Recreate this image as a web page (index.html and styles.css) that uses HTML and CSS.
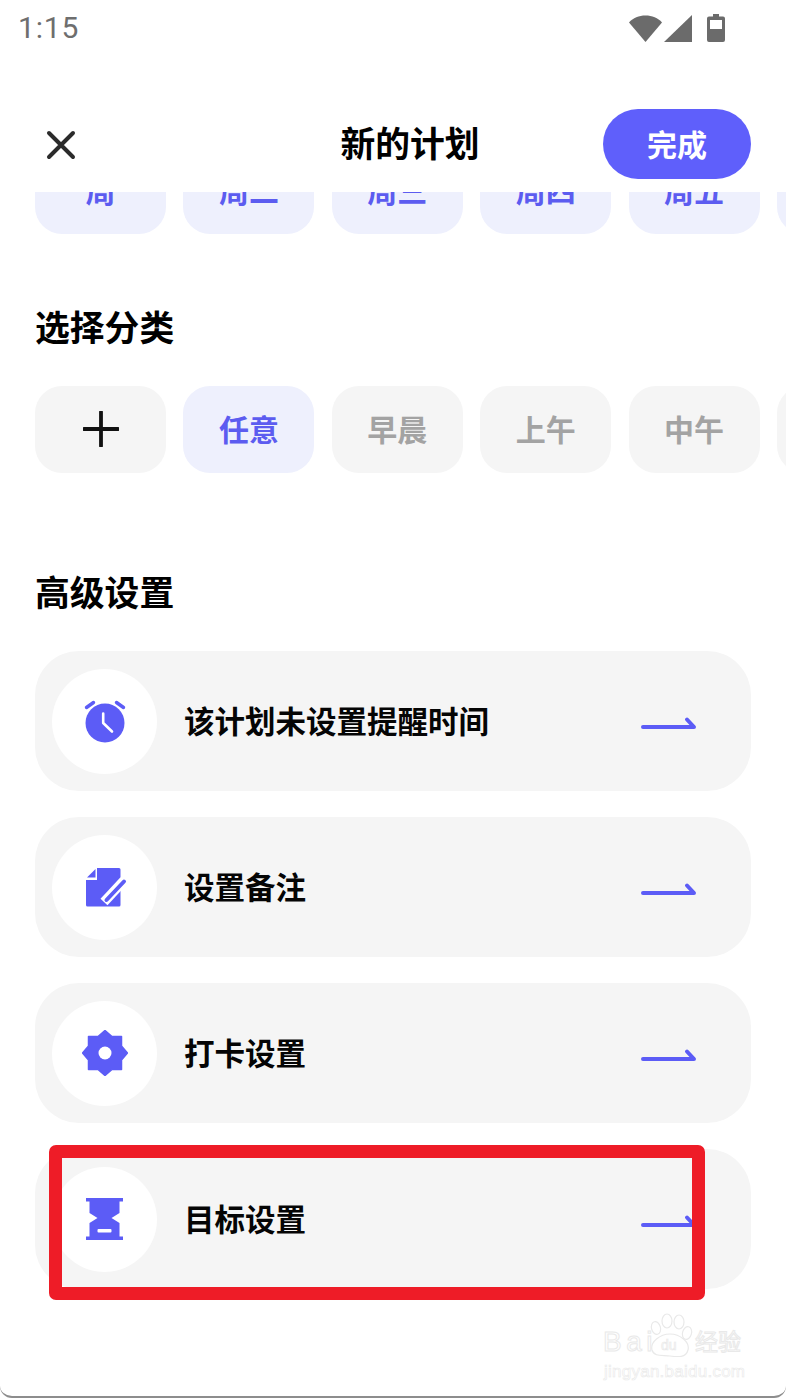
FILE: index.html
```html
<!DOCTYPE html>
<html lang="zh">
<head>
<meta charset="utf-8">
<title>新的计划</title>
<link rel="stylesheet" href="styles.css">
</head>
<body>
<div class="screen">
  <div class="status">
    <span class="time">1:15</span>
    <div class="status-icons">
      <svg class="ic-wifi" width="33" height="27" viewBox="0 0 33 27"><path d="M0 7.5C4 3 10 .6 16.500 .6S29 3 33 7.500L16.500 27Z" fill="#6b6b6b"/></svg>
      <svg class="ic-signal" width="28" height="27" viewBox="0 0 28 27"><path d="M0 27 28 0V27Z" fill="#6b6b6b"/></svg>
      <svg class="ic-batt" width="18" height="28" viewBox="0 0 18 28"><path d="M6 0h6v2.500h4a2 2 0 0 1 2 2V26a2 2 0 0 1-2 2H2a2 2 0 0 1-2-2V4.500a2 2 0 0 1 2-2h4Z" fill="#6b6b6b"/><rect x="3" y="6" width="12" height="9" fill="#fff"/></svg>
    </div>
  </div>

  <header class="topbar">
    <svg class="close" width="30" height="30" viewBox="0 0 30 30"><path d="M3 3 27 27M27 3 3 27" stroke="#2b2b2b" stroke-width="4" stroke-linecap="round"/></svg>
    <h1 class="title">新的计划</h1>
    <button class="done">完成</button>
  </header>

  <main class="content">
    <div class="clip">
      <div class="chips">
        <div class="chip on">周</div>
        <div class="chip on">周二</div>
        <div class="chip on">周三</div>
        <div class="chip on">周四</div>
        <div class="chip on">周五</div>
        <div class="chip on">周六</div>
      </div>
    </div>

    <h2 class="section sec-cat">选择分类</h2>
    <div class="chips">
      <div class="chip chip-add">
        <svg width="36" height="36" viewBox="0 0 36 36"><path d="M18 1V35M1 18H35" stroke="#111" stroke-width="3.800" stroke-linecap="round"/></svg>
      </div>
      <div class="chip on">任意</div>
      <div class="chip">早晨</div>
      <div class="chip">上午</div>
      <div class="chip">中午</div>
      <div class="chip">下午</div>
    </div>

    <h2 class="section sec-adv">高级设置</h2>
    <div class="rows">
      <div class="row">
        <div class="disc">
          <svg width="44" height="44" viewBox="0 0 44 44">
            <path d="M3.500 8.500 10.500 3.500M40.500 8.500 33.500 3.500" stroke="#5c5cf6" stroke-width="3.400" stroke-linecap="round"/>
            <circle cx="22" cy="24" r="19.500" fill="#5c5cf6"/>
            <path d="M20.200 14.500V24L29 32.500" stroke="#fff" stroke-width="2.600" fill="none" stroke-linecap="round" stroke-linejoin="round"/>
          </svg>
        </div>
        <span class="label">该计划未设置提醒时间</span>
        <svg class="arrow" width="56" height="16" viewBox="0 0 56 16"><path d="M3 13H54L47 5.500" stroke="#5c5cf6" stroke-width="4" fill="none" stroke-linecap="round" stroke-linejoin="round"/></svg>
      </div>
      <div class="row">
        <div class="disc">
          <svg class="ic-note" width="40" height="39" viewBox="0 0 40 39">
            <path d="M11 0H33a1.500 1.500 0 0 1 1.500 1.500V37a1.500 1.500 0 0 1-1.500 1.500H1.500A1.500 1.500 0 0 1 0 37V12H11Z" fill="#5c5cf6"/>
            <path d="M1 9.500 9.500 1V9.500Z" fill="#5c5cf6"/>
            <path d="M18 34 38 12.500" stroke="#fff" stroke-width="9.500"/>
            <path d="M20.500 32 38 13.500" stroke="#5c5cf6" stroke-width="4" stroke-linecap="round"/>
          </svg>
        </div>
        <span class="label">设置备注</span>
        <svg class="arrow" width="56" height="16" viewBox="0 0 56 16"><path d="M3 13H54L47 5.500" stroke="#5c5cf6" stroke-width="4" fill="none" stroke-linecap="round" stroke-linejoin="round"/></svg>
      </div>
      <div class="row">
        <div class="disc">
          <svg width="46" height="46" viewBox="0 0 46 46">
            <path d="M23 .5 30 6.500 39.500 6.500 39.500 16 45.500 23 39.500 30 39.500 39.500 30 39.500 23 45.500 16 39.500 6.500 39.500 6.500 30 .5 23 6.500 16 6.500 6.500 16 6.500Z" fill="#5c5cf6" stroke="#5c5cf6" stroke-width="1.500" stroke-linejoin="round"/>
            <circle cx="23" cy="23" r="6.500" fill="#fff"/>
          </svg>
        </div>
        <span class="label">打卡设置</span>
        <svg class="arrow" width="56" height="16" viewBox="0 0 56 16"><path d="M3 13H54L47 5.500" stroke="#5c5cf6" stroke-width="4" fill="none" stroke-linecap="round" stroke-linejoin="round"/></svg>
      </div>
      <div class="row">
        <div class="disc">
          <svg width="37" height="42" viewBox="0 0 37 42">
            <path d="M0 0H37V3.500H33.500V15L25.500 20 33.500 25V38.500H37V42H0V38.500H3.500V25L11.500 20 3.500 15V3.500H0Z" fill="#5c5cf6"/>
            <rect x="11.500" y="31" width="14" height="3.500" rx="1" fill="#fff"/>
          </svg>
        </div>
        <span class="label">目标设置</span>
        <svg class="arrow" width="56" height="16" viewBox="0 0 56 16"><path d="M3 13H54L47 5.500" stroke="#5c5cf6" stroke-width="4" fill="none" stroke-linecap="round" stroke-linejoin="round"/></svg>
      </div>
    </div>
  </main>

  <div class="mark"></div>

  <div class="baidu">
    <div class="b-top">
      <span class="b-bai">Bai</span>
      <svg class="b-paw" width="43" height="44" viewBox="0 0 43 44" fill="none" stroke="#e9e9e9" stroke-width="1.200">
        <ellipse cx="6" cy="15" rx="4.500" ry="6.500" transform="rotate(-15 6 15)"/>
        <ellipse cx="17" cy="8" rx="5" ry="7"/>
        <ellipse cx="29" cy="9" rx="5" ry="7"/>
        <ellipse cx="37" cy="20" rx="4.500" ry="6.500" transform="rotate(15 37 20)"/>
        <path d="M2 37C0 29 10 21 20 21S40 29 38 37 28 44 20 43 4 44 2 37Z"/>
        <text class="b-du" x="11" y="37">du</text>
      </svg>
      <span class="b-jy">经验</span>
    </div>
    <div class="b-url">jingyan.baidu.com</div>
  </div>

  <div class="bottom-edge"></div>
</div>
</body>
</html>
```
FILE: styles.css
```css
* { box-sizing: border-box; }
html, body { margin: 0; padding: 0; background: #fff; }
body { font-family: "Noto Sans CJK SC", "Noto Sans", sans-serif; }

.screen {
  position: relative;
  width: 786px;
  height: 1398px;
  overflow: hidden;
  background: #fff;
}

.status {
  height: 56px;
  padding: 0 61px 0 18px;
  display: flex;
  align-items: center;
  justify-content: space-between;
}
.time {
  font-family: Roboto, sans-serif;
  font-size: 30px;
  color: #6e6e6e;
  letter-spacing: 0.8px;
  line-height: 1;
}
.status-icons { display: flex; align-items: flex-end; gap: 2px; }
.ic-batt { margin-left: 13px; }

.topbar {
  position: relative;
  height: 136px;
  padding: 53px 35px 0 46px;
  display: flex;
  align-items: flex-start;
  justify-content: space-between;
}
.close { margin-top: 21px; }
.title {
  position: absolute;
  left: 0;
  top: 61px;
  width: 820px;
  margin: 0;
  text-align: center;
  font-size: 34.800px;
  font-weight: 700;
  line-height: 50px;
  color: #000;
}
.done {
  width: 148px;
  height: 70px;
  border: 0;
  border-radius: 35px;
  background: #5f5ffb;
  color: #fff;
  font-family: inherit;
  font-size: 30px;
  font-weight: 700;
  padding: 0 0 2px;
}

.content { padding-left: 35px; }
.clip {
  height: 42px;
  display: flex;
  align-items: flex-end;
  overflow: hidden;
}
.chips { display: flex; gap: 17.400px; flex: none; }
.chip {
  flex: none;
  width: 131px;
  height: 87px;
  padding-bottom: 3px;
  border-radius: 27px;
  background: #f5f5f5;
  color: #a3a3a3;
  font-size: 30px;
  font-weight: 700;
  display: flex;
  align-items: center;
  justify-content: center;
}
.chip-add { padding-bottom: 2px; }
.chip.on { background: #eef0fd; color: #5c5cf0; }

.section {
  margin: 0;
  font-size: 34.800px;
  font-weight: 700;
  line-height: 50px;
  color: #000;
}
.sec-cat { margin-top: 67px; margin-bottom: 35px; }
.sec-adv { margin-top: 93px; margin-bottom: 35px; }

.rows {
  width: 716px;
  display: flex;
  flex-direction: column;
  gap: 26px;
}
.row {
  height: 140px;
  border-radius: 44px;
  background: #f5f5f5;
  padding: 0 55px 0 17px;
  display: flex;
  align-items: center;
}
.disc {
  flex: none;
  width: 105px;
  height: 105px;
  border-radius: 50%;
  background: #fff;
  display: flex;
  align-items: center;
  justify-content: center;
}
.ic-note { overflow: visible; margin-left: 3px; }
.label {
  flex: 1;
  margin-left: 27px;
  padding-bottom: 3px;
  font-size: 30.500px;
  font-weight: 700;
  color: #050505;
  line-height: 44px;
}
.arrow { flex: none; margin-top: 2px; }

.mark {
  position: absolute;
  left: 49px;
  top: 1145px;
  width: 656px;
  height: 155px;
  border: 13px solid #ee1c27;
  border-radius: 7px;
}

.baidu {
  position: absolute;
  left: 603px;
  top: 1313px;
  width: 145px;
  color: transparent;
}
.b-top { display: flex; align-items: flex-end; height: 44px; }
.b-bai {
  width: 47px;
  flex: none;
  font-family: "Liberation Sans", sans-serif;
  font-size: 28px;
  line-height: 30px;
  letter-spacing: 4.500px;
  -webkit-text-stroke: 1px #e9e9e9;
}
.b-paw { flex: none; }
.b-du {
  font-family: "Liberation Sans", sans-serif;
  font-size: 14px;
  stroke-width: 0.700;
}
.b-jy {
  flex: none;
  margin-left: 2px;
  font-size: 23px;
  line-height: 34px;
  font-weight: 400;
  white-space: nowrap;
  -webkit-text-stroke: 1px #e9e9e9;
}
.b-url {
  font-family: "Liberation Sans", sans-serif;
  font-size: 17px;
  line-height: 18px;
  margin-top: 6px;
  margin-left: 1px;
  white-space: nowrap;
  letter-spacing: .25px;
  -webkit-text-stroke: .6px #e9e9e9;
}

.bottom-edge {
  position: absolute;
  left: 0;
  right: 0;
  bottom: 0;
  height: 14px;
  border-bottom: 2px solid #8d8d8d;
  border-radius: 0 0 12px 12px;
}
```
